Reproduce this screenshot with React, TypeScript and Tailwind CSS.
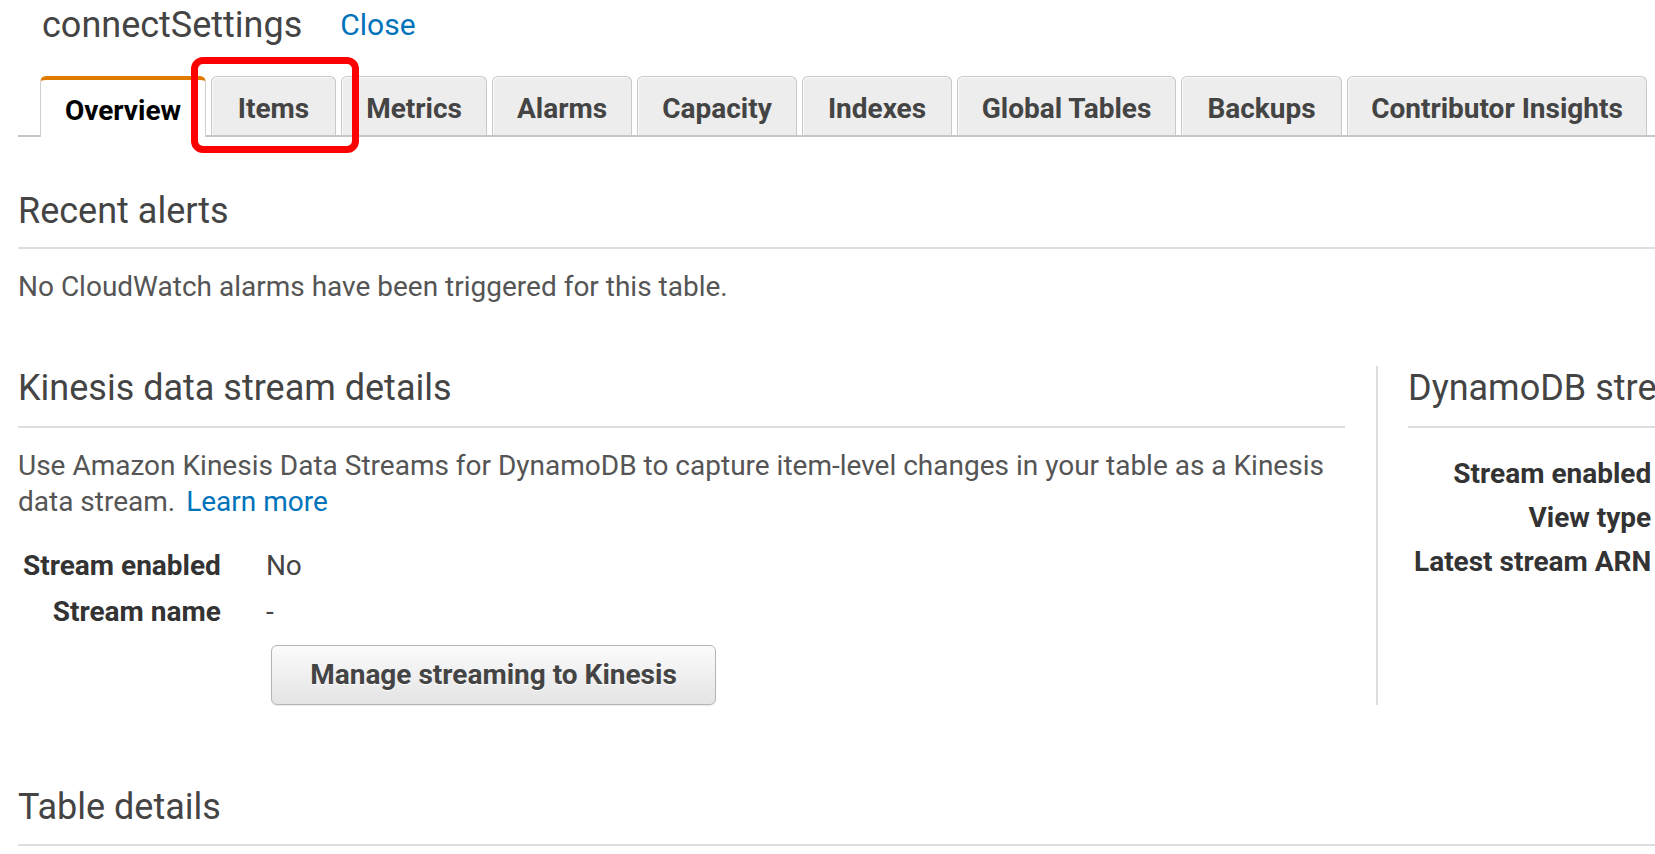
export default function App() {
  const tabs = [
    { label: "Overview", width: "w-[166px]", active: true },
    { label: "Items", width: "w-[125px]", highlighted: true },
    { label: "Metrics", width: "w-[146px]" },
    { label: "Alarms", width: "w-[140px]" },
    { label: "Capacity", width: "w-[160px]" },
    { label: "Indexes", width: "w-[150px]" },
    { label: "Global Tables", width: "w-[219px]" },
    { label: "Backups", width: "w-[161px]" },
    { label: "Contributor Insights", width: "w-[300px]" },
  ];
  const kinesisRows = [
    { label: "Stream enabled", value: "No" },
    { label: "Stream name", value: "-" },
  ];
  const dynamoRows = [
    { label: "Stream enabled", value: "No" },
    { label: "View type", value: "-" },
    { label: "Latest stream ARN", value: "-" },
  ];

  return (
    <div className="h-[854px] w-[1655px] overflow-hidden bg-white font-['Roboto','Noto_Sans',sans-serif] text-[#444]">
      <div className="w-[2400px] pl-[18px]">
        <header className="flex items-baseline gap-[38px] pl-[24px] pt-[2px]">
          <h1 className="text-[36px] font-normal leading-[46px] text-[#444]">connectSettings</h1>
          <a href="#" className="relative -top-[2px] text-[30px] leading-[46px] text-[#0073bb]">
            Close
          </a>
        </header>

        <nav className="mt-[26px] flex items-end gap-[5px] border-b-2 border-[#c6c6c6] pl-[22px]" aria-label="Table tabs">
          {tabs.map((tab) =>
            tab.active ? (
              <div
                key={tab.label}
                className={`${tab.width} relative z-10 -mb-[2px] flex h-[61px] items-center justify-center rounded-t-[6px] border border-b-0 border-t-4 border-[#cfcfcf] border-t-[#e07b00] bg-white pt-[4px] text-[28px] font-bold text-black`}
              >
                {tab.label}
              </div>
            ) : (
              <div
                key={tab.label}
                className={`${tab.width} relative flex h-[59px] items-center justify-center rounded-t-[6px] border border-b-0 border-[#c8c8c8] bg-[#ededed] pt-[6px] text-[28px] font-bold text-[#444] shadow-[inset_1px_1px_0_#fafafa]`}
              >
                {tab.label}
                {tab.highlighted && (
                  <span className="pointer-events-none absolute -left-[21px] -top-[20px] z-20 h-[96px] w-[168px] rounded-[12px] border-[7px] border-[#ff0000]" />
                )}
              </div>
            )
          )}
        </nav>

        <section className="mt-[52px]">
          <h2 className="border-b-2 border-[#dddddd] pb-[14px] text-[36px] font-normal leading-[44px] text-[#444]">Recent alerts</h2>
          <p className="mt-[20px] text-[28px] leading-[36px] text-[#555]">No CloudWatch alarms have been triggered for this table.</p>
        </section>

        <div className="mt-[61px] flex">
          <section className="w-[1327px]">
            <h2 className="border-b-2 border-[#dddddd] pb-[16px] text-[36px] font-normal leading-[44px] text-[#444]">Kinesis data stream details</h2>
            <p className="mt-[20px] text-[28px] leading-[36px] text-[#555]">
              Use Amazon Kinesis Data Streams for DynamoDB to capture item-level changes in your table as a Kinesis data stream.{" "}
              <a href="#" className="ml-[4px] text-[#0073bb]">
                Learn more
              </a>
            </p>

            <dl className="mt-[28px] grid grid-cols-[auto_auto] justify-start gap-x-[45px] gap-y-[10px] pl-[5px] text-[28px] leading-[36px]">
              {kinesisRows.map((row) => (
                <div key={row.label} className="contents">
                  <dt className="text-right font-bold text-[#333]">{row.label}</dt>
                  <dd className="text-[#444]">{row.value}</dd>
                </div>
              ))}
            </dl>

            <button
              type="button"
              className="ml-[253px] mt-[15px] h-[60px] w-[445px] rounded-[6px] border border-[#b5b5b5] bg-gradient-to-b from-[#fbfbfb] to-[#e4e4e4] text-[28px] font-bold text-[#444] shadow-[0_1px_1px_rgba(0,0,0,0.08)] [text-shadow:0_1px_0_#fff]"
            >
              Manage streaming to Kinesis
            </button>
          </section>

          <section className="ml-[31px] w-[800px] border-l-2 border-[#dddddd] pl-[30px]">
            <h2 className="border-b-2 border-[#dddddd] pb-[16px] text-[36px] font-normal leading-[44px] text-[#444]">DynamoDB stream details</h2>
            <dl className="mt-[28px] grid grid-cols-[auto_auto] justify-start gap-x-[45px] gap-y-[8px] pl-[6px] text-[28px] leading-[36px]">
              {dynamoRows.map((row) => (
                <div key={row.label} className="contents">
                  <dt className="text-right font-bold text-[#333]">{row.label}</dt>
                  <dd className="text-[#444]">{row.value}</dd>
                </div>
              ))}
            </dl>
          </section>
        </div>

        <section className="mt-[80px]">
          <h2 className="border-b-2 border-[#dddddd] pb-[15px] text-[36px] font-normal leading-[44px] text-[#444]">Table details</h2>
        </section>
      </div>
    </div>
  );
}
